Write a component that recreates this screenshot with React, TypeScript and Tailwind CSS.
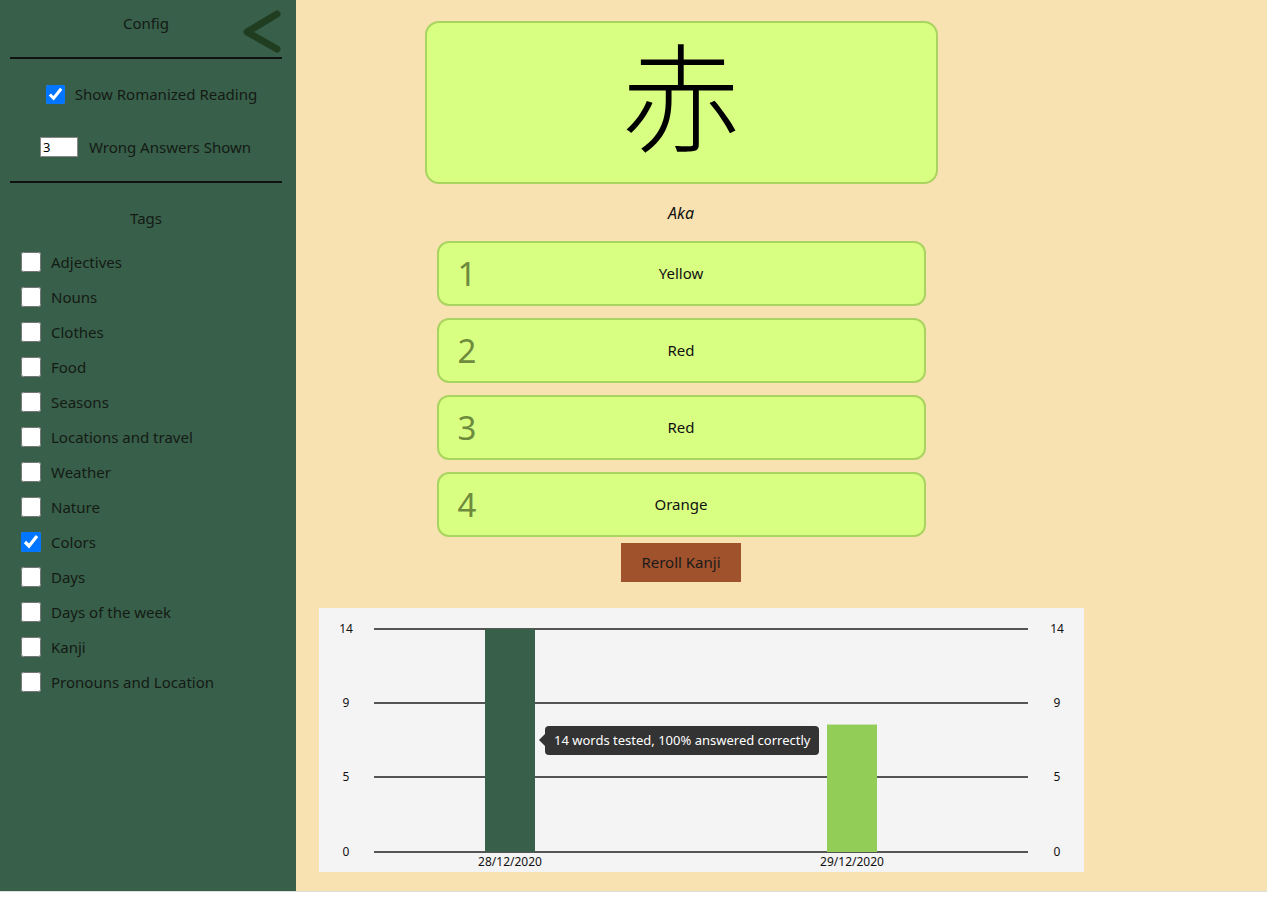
const tags = [
  { name: "Adjectives", checked: false },
  { name: "Nouns", checked: false },
  { name: "Clothes", checked: false },
  { name: "Food", checked: false },
  { name: "Seasons", checked: false },
  { name: "Locations and travel", checked: false },
  { name: "Weather", checked: false },
  { name: "Nature", checked: false },
  { name: "Colors", checked: true },
  { name: "Days", checked: false },
  { name: "Days of the week", checked: false },
  { name: "Kanji", checked: false },
  { name: "Pronouns and Location", checked: false },
];

const answers = ["Yellow", "Red", "Red", "Orange"];

function Sidebar() {
  return (
    <aside className="w-[296px] shrink-0 bg-[#385f4a] pr-[4px] text-[15px] leading-[20px] text-[#141a14]">
      {/* header */}
      <div className="relative h-[57px] px-[10px]">
        <p className="pt-[13px] text-center">Config</p>
        <svg className="absolute left-[240px] top-[9px]" width="42" height="44" viewBox="0 0 42 44">
          <polyline points="37,5 7,23 37,40" fill="none" stroke="#213d20" strokeWidth="7" strokeLinecap="round" strokeLinejoin="round" />
        </svg>
      </div>
      <div className="mx-[10px] h-[2px] bg-[#111]" />

      <label className="mt-[25px] flex h-[20px] items-center justify-center gap-[10px] pl-[11px]">
        <input type="checkbox" defaultChecked className="h-[19px] w-[19px] accent-[#0075ff]" />
        <span>Show Romanized Reading</span>
      </label>
      <label className="mt-[33px] flex h-[20px] items-center justify-center gap-[11px] pr-[1px]">
        <input
          type="number"
          defaultValue={3}
          className="h-[20px] w-[38px] border border-[#888] bg-white px-[2px] text-[13px] leading-none text-black"
        />
        <span>Wrong Answers Shown</span>
      </label>
      <div className="mx-[10px] mt-[24px] h-[2px] bg-[#111]" />

      <p className="mt-[25px] text-center">Tags</p>
      <ul className="mt-[16px] flex flex-col px-[21px]">
        {tags.map((t) => (
          <li key={t.name} className="flex h-[35px] items-center gap-[10px]">
            <input type="checkbox" defaultChecked={t.checked} className="h-[20px] w-[20px] accent-[#0075ff]" />
            <span>{t.name}</span>
          </li>
        ))}
      </ul>
    </aside>
  );
}

function Chart() {
  const left = 55;
  const right = 709;
  const top = 21;
  const bottom = 244;
  const grid = [
    { label: "14", y: top },
    { label: "9", y: 95 },
    { label: "5", y: 169 },
    { label: "0", y: bottom },
  ];
  const unit = (bottom - top) / 14;
  return (
    <div className="relative h-[264px] w-[765px] bg-[#f4f4f4]">
      <svg width="765" height="264" className="block">
        {grid.map((g) => (
          <g key={g.label}>
            <line x1={left} x2={right} y1={g.y} y2={g.y} stroke="#555" strokeWidth="2" />
            <text x="27" y={g.y + 4} textAnchor="middle" fontSize="12" fill="#111">
              {g.label}
            </text>
            <text x="738" y={g.y + 4} textAnchor="middle" fontSize="12" fill="#111">
              {g.label}
            </text>
          </g>
        ))}
        <rect x="166" y={bottom - 14 * unit} width="50" height={14 * unit} fill="#385f4a" />
        <rect x="508" y={bottom - 8 * unit} width="50" height={8 * unit} fill="#92cd58" />
        <text x="191" y="258" textAnchor="middle" fontSize="12" fill="#111">28/12/2020</text>
        <text x="533" y="258" textAnchor="middle" fontSize="12" fill="#111">29/12/2020</text>
      </svg>
      {/* tooltip */}
      <div className="absolute left-[226px] top-[118px] flex h-[29px] items-center rounded-[4px] bg-[#333] px-[9px] text-[13px] text-white">
        <span className="absolute left-[-6px] top-[8px] h-0 w-0 border-y-[6px] border-r-[6px] border-y-transparent border-r-[#333]" />
        14 words tested, 100% answered correctly
      </div>
    </div>
  );
}

export default function App() {
  return (
    <div className="bg-white font-['Noto_Sans',sans-serif]">
      <div className="flex h-[891px] w-full">
        <Sidebar />
        <main className="flex-1 bg-[#f9e2b1] pl-[23px] text-[#111]">
          <div className="flex w-[724px] flex-col items-center">
            {/* kanji card */}
            <div className="mt-[21px] flex h-[163px] w-[513px] items-center justify-center rounded-[14px] border-2 border-[#a9d460] bg-[#d9ff82] pb-[22px]">
              <span className="font-['Noto_Sans_CJK_JP',sans-serif] text-[118px] font-light leading-none text-black">赤</span>
            </div>
            <p className="mt-[18px] h-[22px] text-[16px] italic leading-[22px]">Aka</p>
            <div className="mt-[17px] flex flex-col gap-[12px]">
              {answers.map((a, i) => (
                <button
                  key={i}
                  className="relative flex h-[65px] w-[489px] items-center justify-center rounded-[12px] border-2 border-[#a9d460] bg-[#d9ff82] text-[15px] text-[#111]"
                >
                  <span className="absolute left-[19px] text-[33px] leading-none text-[#6e8b3d]">{i + 1}</span>
                  {a}
                </button>
              ))}
            </div>
            <button className="mt-[6px] h-[39px] w-[120px] bg-[#a0522d] text-[15px] text-[#1a1a1a]">
              Reroll Kanji
            </button>
          </div>
          <div className="mt-[26px]">
            <Chart />
          </div>
        </main>
      </div>
      <div className="h-[9px] border-t border-[#ddd] bg-white" />
    </div>
  );
}
